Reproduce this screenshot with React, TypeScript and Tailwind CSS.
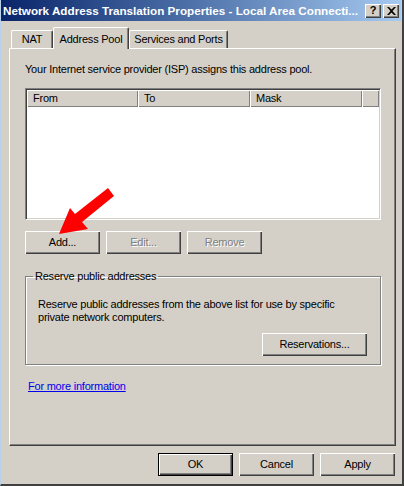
import React from 'react'

const FONT = { fontFamily: '"Liberation Sans", Arial, sans-serif' }

// raised classic button
function Btn({
  label,
  disabled = false,
  isDefault = false,
  width = 'w-[75px]',
}: {
  label: string
  disabled?: boolean
  isDefault?: boolean
  width?: string
}) {
  const base = isDefault
    ? 'border border-black shadow-[inset_1px_1px_0_#fff,inset_-1px_-1px_0_#404040,inset_-2px_-2px_0_#808080]'
    : 'shadow-[inset_1px_1px_0_#fff,inset_-1px_-1px_0_#404040,inset_-2px_-2px_0_#808080]'
  return (
    <div
      className={`${width} h-[23px] flex items-center justify-center bg-[#d4d0c8] text-[11px] ${base} ${
        disabled ? 'text-[#808080] [text-shadow:1px_1px_0_#fff]' : 'text-black'
      }`}
    >
      {label}
    </div>
  )
}

function Tab({ label, active = false, width }: { label: string; active?: boolean; width: string }) {
  if (active) {
    return (
      <div
        className={`${width} h-[22px] -mb-px z-10 bg-[#d4d0c8] flex items-start justify-center pt-[3px] text-[11px] border-l border-t border-white border-r border-r-[#404040] shadow-[inset_-1px_0_0_#808080] rounded-t-[2px]`}
      >
        {label}
      </div>
    )
  }
  return (
    <div
      className={`${width} h-[18px] bg-[#d4d0c8] flex items-center justify-center text-[11px] border-l border-t border-white border-r border-r-[#404040] shadow-[inset_-1px_0_0_#808080] rounded-t-[2px]`}
    >
      {label}
    </div>
  )
}

function ListHeader({ label, width }: { label: string; width: string }) {
  return (
    <div
      className={`${width} h-[17px] flex items-center pl-[6px] text-[11px] shadow-[inset_1px_1px_0_#fff,inset_-1px_-1px_0_#808080]`}
    >
      {label}
    </div>
  )
}

export default function App() {
  return (
    <div
      className="w-[404px] h-[486px] bg-[#d4d0c8] flex flex-col border-l border-l-[#b9d1ea] border-r-2 border-r-[#404040] border-b-2 border-b-[#404040] relative overflow-hidden tracking-[-0.22px]"
      style={FONT}
    >
      {/* Title bar */}
      <div className="h-[21px] mr-px flex items-center justify-between pl-[2px] pr-[2px] bg-gradient-to-r from-[#0a246a] to-[#a6caf0]">
        <span className="text-white font-bold text-[11.7px] tracking-normal whitespace-nowrap">
          Network Address Translation Properties - Local Area Connecti...
        </span>
        <div className="flex gap-[2px]">
          <div className="w-[16px] h-[14px] bg-[#d4d0c8] flex items-center justify-center text-[11px] font-bold leading-none shadow-[inset_1px_1px_0_#fff,inset_-1px_-1px_0_#404040,inset_-2px_-2px_0_#808080]">
            ?
          </div>
          <div className="w-[16px] h-[14px] bg-[#d4d0c8] flex items-center justify-center shadow-[inset_1px_1px_0_#fff,inset_-1px_-1px_0_#404040,inset_-2px_-2px_0_#808080]">
            <svg width="9" height="8" viewBox="0 0 9 8">
              <path d="M0 0h2l2.5 2.5L7 0h2L5.5 4 9 8H7L4.5 5.5 2 8H0l3.5-4z" fill="#000" />
            </svg>
          </div>
        </div>
      </div>

      {/* Tabs + panel */}
      <div className="flex flex-col pl-[8px] pr-[6px] pt-[6px]">
        <div className="flex items-end pl-[2px]">
          <Tab label="NAT" width="w-[42px]" />
          <Tab label="Address Pool" width="w-[76px]" active />
          <Tab label="Services and Ports" width="w-[99px]" />
        </div>
        <div className="h-[398px] flex flex-col pl-[15px] pt-[14px] border-l border-t border-white border-r border-b border-r-[#404040] border-b-[#404040] shadow-[inset_-1px_-1px_0_#808080]">
          <p className="text-[11px] leading-[13px]">
            Your Internet service provider (ISP) assigns this address pool.
          </p>

          {/* List view */}
          <div className="mt-[12px] w-[356px] h-[132px] bg-white border border-[#808080] border-r-white border-b-white shadow-[inset_1px_1px_0_#404040,inset_-1px_-1px_0_#d4d0c8] p-px">
            <div className="flex bg-[#d4d0c8]">
              <ListHeader label="From" width="w-[111px]" />
              <ListHeader label="To" width="w-[112px]" />
              <ListHeader label="Mask" width="w-[112px]" />
              <ListHeader label="" width="flex-1" />
            </div>
          </div>

          <div className="mt-[11px] flex gap-[6px]">
            <Btn label="Add..." />
            <Btn label="Edit..." disabled />
            <Btn label="Remove" disabled />
          </div>

          {/* Group box */}
          <fieldset className="mt-[16px] w-[356px] h-[95px] border border-[#808080] shadow-[inset_1px_1px_0_#fff,1px_1px_0_#fff] pl-[12px] pr-[13px]">
            <legend className="ml-[-5px] px-[2px] text-[11px] leading-[13px]">Reserve public addresses</legend>
            <p className="mt-[15px] text-[11px] leading-[13px]">
              Reserve public addresses from the above list for use by specific private network computers.
            </p>
            <div className="mt-[9px] flex justify-end">
              <Btn label="Reservations..." width="w-[105px]" />
            </div>
          </fieldset>

          <a className="mt-[13px] ml-[3px] text-[11px] text-[#0000ee] underline w-fit">For more information</a>
        </div>
      </div>

      {/* Dialog buttons */}
      <div className="mt-[7px] pr-[7px] flex justify-end gap-[6px]">
        <Btn label="OK" isDefault />
        <Btn label="Cancel" />
        <Btn label="Apply" />
      </div>

      {/* Annotation arrow */}
      <svg className="absolute left-0 top-0 pointer-events-none" width="404" height="486">
        <polygon
          points="58,234 69,208 74,214 107,188 113,196 81,222 87,229"
          fill="#ff0000"
        />
      </svg>
    </div>
  )
}
